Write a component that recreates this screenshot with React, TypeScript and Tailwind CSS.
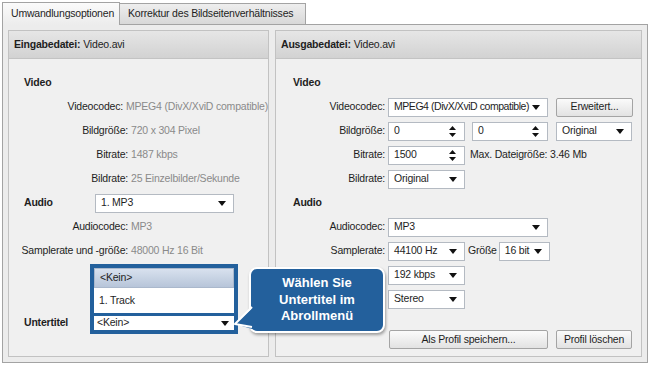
import React from "react";

function Arrow() {
  return (
    <svg width="8" height="5" viewBox="0 0 8 5" className="shrink-0">
      <path d="M0 0h8L4 5z" fill="#111" />
    </svg>
  );
}

function Select({ value, w, tight = false }: { value: string; w: string; tight?: boolean }) {
  return (
    <div className={`h-[19px] ${w} flex items-center justify-between border border-[#b4bac2] bg-white pl-[5px] pr-[7px]`}>
      <span className={tight ? "tracking-[-0.45px]" : ""}>{value}</span>
      <Arrow />
    </div>
  );
}

function Spin({ value, w }: { value: string; w: string }) {
  return (
    <div className={`h-[19px] ${w} flex items-center justify-between border border-[#b4bac2] bg-white pl-[5px] pr-[8px]`}>
      <span>{value}</span>
      <svg width="7" height="11" viewBox="0 0 7 11" className="shrink-0">
        <path d="M3.5 0L7 4H0z M0 7h7L3.5 11z" fill="#111" />
      </svg>
    </div>
  );
}

function Btn({ label, w }: { label: string; w: string }) {
  return (
    <div className={`h-[19px] ${w} flex items-center justify-center rounded-[2px] border border-[#a4a4a4] bg-linear-to-b from-[#fbfbfb] to-[#e2e2e2]`}>
      {label}
    </div>
  );
}

function Header({ title }: { title: string }) {
  return (
    <div className="h-[28px] flex items-center pl-[5px] border-b border-[#c3c3c3] bg-linear-to-b from-[#e6e6e6] to-[#d2d2d2]">
      <span className="font-bold">{title}</span>
      <span className="ml-[3px]">Video.avi</span>
    </div>
  );
}

function InfoRow({ label, value }: { label: string; value: string }) {
  return (
    <div className="h-6 flex items-center">
      <span className="w-[119px] text-right">{label}</span>
      <span className="ml-[3px] text-[#8a8a8a]">{value}</span>
    </div>
  );
}

function Row({ label, children }: { label: string; children?: React.ReactNode }) {
  return (
    <div className="h-6 flex items-center">
      <span className="w-[109px] text-right">{label}</span>
      <div className="ml-[3px] flex items-center">{children}</div>
    </div>
  );
}

export default function App() {
  return (
    <div className="relative w-[650px] h-[367px] bg-white text-[10.5px] tracking-[-0.2px] whitespace-nowrap text-[#1e1e1e] font-['Liberation_Sans',Arial,sans-serif] overflow-hidden">
      {/* Tabs */}
      <div className="flex items-end h-[24px] pl-[2px]">
        <div className="relative z-10 -mb-px h-[23px] w-[118px] flex items-center pl-[8px] border border-b-0 border-[#a3a3a3] bg-linear-to-b from-[#fbfbfb] to-[#ececec]">
          Umwandlungsoptionen
        </div>
        <div className="h-[21px] w-[186px] flex items-center pl-[8px] border border-l-0 border-b-0 border-[#a3a3a3] bg-linear-to-b from-[#eeeeee] to-[#d8d8d8]">
          Korrektur des Bildseitenverhältnisses
        </div>
      </div>

      {/* Frame */}
      <div className="ml-[2px] w-[646px] h-[339px] flex gap-[6px] p-[5px] border border-[#a3a3a3] bg-[#ececec]">
        {/* Input panel */}
        <div className="w-[261px] flex flex-col border border-[#c2c2c2] bg-[#f0f0f0]">
          <Header title="Eingabedatei:" />
          <div className="pt-[12px] flex flex-col">
            <div className="h-6 flex items-center pl-[15px] font-bold">Video</div>
            <InfoRow label="Videocodec:" value="MPEG4 (DivX/XviD compatible)" />
            <InfoRow label="Bildgröße:" value="720 x 304 Pixel" />
            <InfoRow label="Bitrate:" value="1487 kbps" />
            <InfoRow label="Bildrate:" value="25 Einzelbilder/Sekunde" />
            <div className="h-6 flex items-center">
              <span className="w-[86px] pl-[15px] font-bold">Audio</span>
              <Select value="1. MP3" w="w-[139px]" />
            </div>
            <InfoRow label="Audiocodec:" value="MP3" />
            <InfoRow label="Samplerate und -größe:" value="48000 Hz 16 Bit" />
            <div className="mt-[1px] flex items-end">
              <span className="w-[81px] pl-[15px] h-6 leading-6 font-bold">Untertitel</span>
              <div className="w-[148px] flex flex-col border-4 border-[#23609c] bg-[#23609c]">
                <div className="h-[20px] flex items-center pl-[5px] border border-[#aab8cc] bg-linear-to-b from-[#d8e1ee] to-[#b7c5d9]">&lt;Kein&gt;</div>
                <div className="h-[25px] flex items-center pl-[5px] bg-white">1. Track</div>
                <div className="mt-[3px] h-[14px] flex items-center justify-between pl-[3px] pr-[5px] bg-white">
                  <span>&lt;Kein&gt;</span>
                  <Arrow />
                </div>
              </div>
            </div>
          </div>
        </div>

        {/* Output panel */}
        <div className="w-[367px] flex flex-col border border-[#c2c2c2] bg-[#f0f0f0]">
          <Header title="Ausgabedatei:" />
          <div className="pt-[12px] flex flex-col">
            <div className="h-6 flex items-center pl-[17px] font-bold">Video</div>
            <Row label="Videocodec:">
              <Select value="MPEG4 (DivX/XviD compatible)" w="w-[160px]" tight />
              <div className="ml-[8px]"><Btn label="Erweitert..." w="w-[77px]" /></div>
            </Row>
            <Row label="Bildgröße:">
              <Spin value="0" w="w-[77px]" />
              <div className="ml-[7px]"><Spin value="0" w="w-[76px]" /></div>
              <div className="ml-[8px]"><Select value="Original" w="w-[76px]" /></div>
            </Row>
            <Row label="Bitrate:">
              <Spin value="1500" w="w-[77px]" />
              <span className="ml-[5px]">Max. Dateigröße: 3.46 Mb</span>
            </Row>
            <Row label="Bildrate:">
              <Select value="Original" w="w-[77px]" />
            </Row>
            <div className="h-6 flex items-center pl-[17px] font-bold">Audio</div>
            <Row label="Audiocodec:">
              <Select value="MP3" w="w-[160px]" />
            </Row>
            <Row label="Samplerate:">
              <Select value="44100 Hz" w="w-[77px]" />
              <span className="ml-[3px] mr-[2px]">Größe</span>
              <Select value="16 bit" w="w-[51px]" />
            </Row>
            <Row label="">
              <Select value="192 kbps" w="w-[77px]" />
            </Row>
            <Row label="">
              <Select value="Stereo" w="w-[77px]" />
            </Row>
            <div className="mt-[19px] flex items-center pl-[113px]">
              <Btn label="Als Profil speichern..." w="w-[159px]" />
              <div className="ml-[8px]"><Btn label="Profil löschen" w="w-[76px]" /></div>
            </div>
          </div>
        </div>
      </div>

      {/* Callout */}
      <div className="absolute left-[249px] top-[267px] w-[136px] h-[66px] rounded-[8px] border-2 border-white bg-[#23609c] shadow-[1px_2px_3px_rgba(0,0,0,0.35)] flex flex-col items-center justify-center text-white font-bold text-[13px] tracking-normal leading-[16.5px]">
        <span>Wählen Sie</span>
        <span>Untertitel im</span>
        <span>Abrollmenü</span>
        <svg width="22" height="30" viewBox="0 0 22 30" className="absolute left-[-18px] top-[34px]">
          <path d="M2 21L21 3.5V26.5z" fill="#23609c" />
          <path d="M19 4L2 21L19 24" fill="none" stroke="#ffffff" strokeWidth="2" strokeLinejoin="round" />
        </svg>
      </div>
    </div>
  );
}
